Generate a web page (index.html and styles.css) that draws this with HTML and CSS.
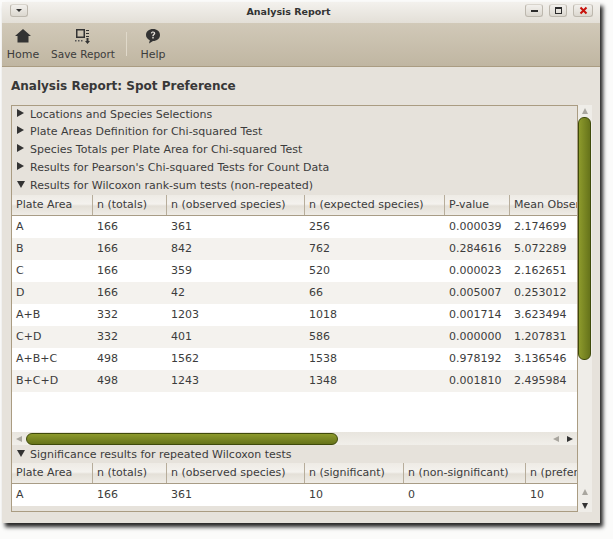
FILE: index.html
```html
<!DOCTYPE html>
<html>
<head>
    <title>Analysis Report</title>
    <link rel="stylesheet" href="styles.css">
</head>
<body>
    <div class="window">
        <div class="titlebar">
            <div class="menu-btn"><svg width="8" height="4" viewBox="0 0 8 4"><path d="M1 0h6L4 3z" fill="#333"/></svg></div>
            <div class="title">Analysis Report</div>
            <div class="win-btns">
                <div class="win-btn"><svg width="9" height="9" viewBox="0 0 9 9"><rect x="1" y="4" width="7" height="2" fill="#2c2c2c"/></svg></div>
                <div class="win-btn"><svg width="9" height="9" viewBox="0 0 9 9"><path d="M1 1h7v7H1zM2 3v4h5V3z" fill="#2c2c2c" fill-rule="evenodd"/></svg></div>
                <div class="win-btn"><svg width="9" height="9" viewBox="0 0 9 9"><path d="M1.5 1.5l6 6M7.5 1.5l-6 6" stroke="#c8120c" stroke-width="2"/></svg></div>
            </div>
        </div>

        <div class="toolbar">
            <div class="tool tool-home">
                <svg width="16" height="14" viewBox="0 0 16 14"><path d="M8 0L0 7h2.500v6.500h11V7H16z" fill="#333"/></svg>
                <span>Home</span>
            </div>
            <div class="tool tool-save">
                <svg width="16" height="16" viewBox="0 0 16 16">
                    <path d="M1 1h9v9H1zM2.500 2.500v6h6v-6z" fill="#333" fill-rule="evenodd"/>
                    <path d="M11 2h3v1h-3zM11 5h3v1h-3zM11 8h3v1h-3z" fill="#333"/>
                    <path d="M11.500 10h2v3H15l-2.500 3L10 13h1.500z" fill="#333"/>
                    <path d="M0 12h1.500v1.500H0zM3 12h1.500v1.500H3zM6 12h1.500v1.500H6z" fill="#555"/>
                </svg>
                <span>Save Report</span>
            </div>
            <div class="tool-sep"></div>
            <div class="tool tool-help">
                <svg width="16" height="16" viewBox="0 0 16 16">
                    <path d="M8 1c4 0 7 2.400 7 6s-3 6-7 6l-4 2.500.8-3.200C2.500 11.200 1 9.300 1 7c0-3.600 3-6 7-6z" fill="#333"/>
                    <path d="M5.800 5.300C6 4 7 3.400 8.100 3.400c1.300 0 2.200.8 2.200 1.900 0 1.700-1.700 1.600-1.700 3H7.300c0-2 1.600-2 1.600-3 0-.5-.4-.8-.9-.8-.5 0-.9.300-1 .9zM7.300 9h1.400v1.400H7.300z" fill="#e6e2db"/>
                </svg>
                <span>Help</span>
            </div>
        </div>

        <div class="content">
            <h1 class="heading">Analysis Report: Spot Preference</h1>
            <div class="panel">
                <div class="panel-main">
                    <div class="expander"><span class="arrow-right"></span>Locations and Species Selections</div>
                    <div class="expander"><span class="arrow-right"></span>Plate Areas Definition for Chi-squared Test</div>
                    <div class="expander"><span class="arrow-right"></span>Species Totals per Plate Area for Chi-squared Test</div>
                    <div class="expander"><span class="arrow-right"></span>Results for Pearson's Chi-squared Tests for Count Data</div>
                    <div class="expander expander-open"><span class="arrow-down"></span>Results for Wilcoxon rank-sum tests (non-repeated)</div>

                    <div class="table-wrap table-first">
                        <div class="row head cols-a">
                            <div class="cell">Plate Area</div>
                            <div class="cell">n (totals)</div>
                            <div class="cell">n (observed species)</div>
                            <div class="cell">n (expected species)</div>
                            <div class="cell">P-value</div>
                            <div class="cell">Mean Observed</div>
                        </div>
                        <div class="row cols-a"><div class="cell">A</div><div class="cell">166</div><div class="cell">361</div><div class="cell">256</div><div class="cell">0.000039</div><div class="cell">2.174699</div></div>
                        <div class="row alt cols-a"><div class="cell">B</div><div class="cell">166</div><div class="cell">842</div><div class="cell">762</div><div class="cell">0.284616</div><div class="cell">5.072289</div></div>
                        <div class="row cols-a"><div class="cell">C</div><div class="cell">166</div><div class="cell">359</div><div class="cell">520</div><div class="cell">0.000023</div><div class="cell">2.162651</div></div>
                        <div class="row alt cols-a"><div class="cell">D</div><div class="cell">166</div><div class="cell">42</div><div class="cell">66</div><div class="cell">0.005007</div><div class="cell">0.253012</div></div>
                        <div class="row cols-a"><div class="cell">A+B</div><div class="cell">332</div><div class="cell">1203</div><div class="cell">1018</div><div class="cell">0.001714</div><div class="cell">3.623494</div></div>
                        <div class="row alt cols-a"><div class="cell">C+D</div><div class="cell">332</div><div class="cell">401</div><div class="cell">586</div><div class="cell">0.000000</div><div class="cell">1.207831</div></div>
                        <div class="row cols-a"><div class="cell">A+B+C</div><div class="cell">498</div><div class="cell">1562</div><div class="cell">1538</div><div class="cell">0.978192</div><div class="cell">3.136546</div></div>
                        <div class="row alt cols-a"><div class="cell">B+C+D</div><div class="cell">498</div><div class="cell">1243</div><div class="cell">1348</div><div class="cell">0.001810</div><div class="cell">2.495984</div></div>
                    </div>

                    <div class="hscroll">
                        <span class="sarrow-left dim"></span>
                        <div class="hthumb"></div>
                        <span class="sarrow-left dim push"></span>
                        <span class="sarrow-right"></span>
                    </div>

                    <div class="expander"><span class="arrow-down"></span>Significance results for repeated Wilcoxon tests</div>

                    <div class="table-wrap">
                        <div class="row head cols-b">
                            <div class="cell">Plate Area</div>
                            <div class="cell">n (totals)</div>
                            <div class="cell">n (observed species)</div>
                            <div class="cell">n (significant)</div>
                            <div class="cell">n (non-significant)</div>
                            <div class="cell">n (preferred)</div>
                        </div>
                        <div class="row cols-b"><div class="cell">A</div><div class="cell">166</div><div class="cell">361</div><div class="cell">10</div><div class="cell">0</div><div class="cell">10</div></div>
                    </div>
                </div>
                <div class="vscroll">
                    <span class="sarrow-up dim"></span>
                    <div class="vthumb"></div>
                    <span class="sarrow-up dim push"></span>
                    <span class="sarrow-down"></span>
                </div>
            </div>
        </div>
    </div>
</body>
</html>
```

FILE: styles.css
```css
* {
    box-sizing: border-box;
}
body {
    margin: 0;
    width: 613px;
    height: 539px;
    overflow: hidden;
    padding: 2px 0 0 2px;
    background-color: #fbfbfa;
    font-family: "DejaVu Sans", sans-serif;
    font-size: 11px;
    color: #3c3c3c;
}
.window {
    width: 598px;
    height: 521px;
    display: flex;
    flex-direction: column;
    background-color: #e6e2db;
    box-shadow: 3px 4px 4px rgba(0,0,0,0.85);
}
.titlebar {
    height: 21px;
    display: flex;
    align-items: center;
    padding: 0 7px 0 8px;
    background: linear-gradient(#f3f1ed, #e3dfd7);
}
.menu-btn, .win-btn {
    height: 13px;
    display: flex;
    align-items: center;
    justify-content: center;
    border: 1px solid #bdb8ae;
    border-top-color: #d8d4cc;
    border-radius: 3px;
    background: linear-gradient(#f2f0ec, #dcd8d0);
}
.menu-btn {
    width: 18px;
    margin-top: -4px;
}
.title {
    flex: 1;
    text-align: center;
    font-size: 9.500px;
    font-weight: bold;
    color: #333;
    margin-top: -2px;
    padding-left: 24px;
}
.win-btns {
    display: flex;
    gap: 6px;
    margin-top: -4px;
}
.win-btn {
    width: 18px;
}
.win-btn:last-child {
    width: 20px;
}
.toolbar {
    height: 44px;
    display: flex;
    background: linear-gradient(#d1c9b8, #c0b6a2);
    border-bottom: 1px solid #aa9c82;
}
.tool {
    display: flex;
    flex-direction: column;
    align-items: center;
    padding-top: 5px;
    gap: 4px;
    color: #3c3c3c;
}
.tool svg {
    height: 16px;
}
.tool-home {
    width: 38px;
    margin-left: 2px;
}
.tool-save {
    width: 72px;
    margin-left: 5px;
    font-size: 10.500px;
}
.tool-sep {
    width: 1px;
    height: 24px;
    margin: 9px 0 0 7px;
    background-color: #e0d9ca;
}
.tool-help {
    width: 50px;
    margin-left: 1px;
}
.content {
    flex: 1;
    display: flex;
    flex-direction: column;
    padding: 0 9px;
    min-height: 0;
}
.heading {
    margin: 0;
    height: 38px;
    padding-top: 10px;
    font-size: 12px;
    line-height: 18px;
    font-weight: bold;
    color: #383838;
}
.panel {
    width: 581px;
    height: 407px;
    display: flex;
}
.panel-main {
    width: 567px;
    display: flex;
    flex-direction: column;
    border: 1px solid #aa9c82;
    overflow: hidden;
}
.expander {
    height: 18px;
    flex: none;
    display: flex;
    align-items: center;
    padding-left: 5px;
    white-space: nowrap;
}
.expander:first-child {
    height: 16px;
}
.expander-open {
    height: 19px;
}
.arrow-right {
    width: 0;
    height: 0;
    margin-right: 6px;
    border-left: 7px solid #333;
    border-top: 4px solid transparent;
    border-bottom: 4px solid transparent;
    margin-top: -2px;
}
.arrow-down {
    width: 0;
    height: 0;
    margin-right: 5px;
    border-top: 7px solid #333;
    border-left: 4px solid transparent;
    border-right: 4px solid transparent;
    margin-top: -2px;
}
.table-wrap {
    flex: none;
}
.table-first {
    height: 237px;
    background-color: #fff;
}
.row {
    display: grid;
    height: 22px;
    background-color: #fff;
}
.row.alt {
    background-color: #f4f2ee;
}
.cols-a {
    grid-template-columns: 81px 74px 138px 140px 65px 120px;
}
.cols-b {
    grid-template-columns: 81px 74px 138px 99px 122px 120px;
}
.cell {
    padding-left: 4px;
    line-height: 21px;
    white-space: nowrap;
    overflow: hidden;
}
.row.head {
    height: 21px;
    background: linear-gradient(#eeebe5, #f4f2ee 45%, #e4e0d8 55%, #efece6);
    border-bottom: 1px solid #a89c86;
}
.head .cell {
    line-height: 19px;
    border-right: 1px solid #b7ad9b;
}
.head .cell:last-child {
    border-right: 0;
}
.hscroll {
    height: 13px;
    flex: none;
    display: flex;
    align-items: center;
    padding: 0 4px 0 0;
    background: linear-gradient(#e8e5de, #f1efea);
}
.hthumb {
    width: 312px;
    height: 12px;
    margin-left: 4px;
    border: 1px solid #3f4a0a;
    border-radius: 6px;
    background: linear-gradient(#8d9a2c, #66731a);
}
.vscroll {
    width: 14px;
    display: flex;
    flex-direction: column;
    align-items: center;
    padding: 3px 0 3px 0;
    background-color: #efede8;
}
.vthumb {
    width: 13px;
    height: 243px;
    margin-top: 3px;
    margin-right: 1px;
    border: 1px solid #3f4a0a;
    border-radius: 6px;
    background: linear-gradient(90deg, #8d9a2c, #66731a);
}
.sarrow-left, .sarrow-right, .sarrow-up, .sarrow-down {
    width: 0;
    height: 0;
    flex: none;
}
.sarrow-left {
    margin-left: 4px;
    border-right: 6px solid #333;
    border-top: 3px solid transparent;
    border-bottom: 3px solid transparent;
}
.sarrow-right {
    margin-left: 8px;
    border-left: 6px solid #333;
    border-top: 3px solid transparent;
    border-bottom: 3px solid transparent;
}
.sarrow-up {
    border-bottom: 6px solid #333;
    border-left: 3px solid transparent;
    border-right: 3px solid transparent;
}
.sarrow-down {
    margin-top: 8px;
    border-top: 6px solid #333;
    border-left: 3px solid transparent;
    border-right: 3px solid transparent;
}
.sarrow-left.dim {
    border-right-color: #a9a69f;
}
.sarrow-up.dim {
    border-bottom-color: #a9a69f;
}
.sarrow-left.push {
    margin-left: auto;
}
.sarrow-up.push {
    margin-top: auto;
}
```
